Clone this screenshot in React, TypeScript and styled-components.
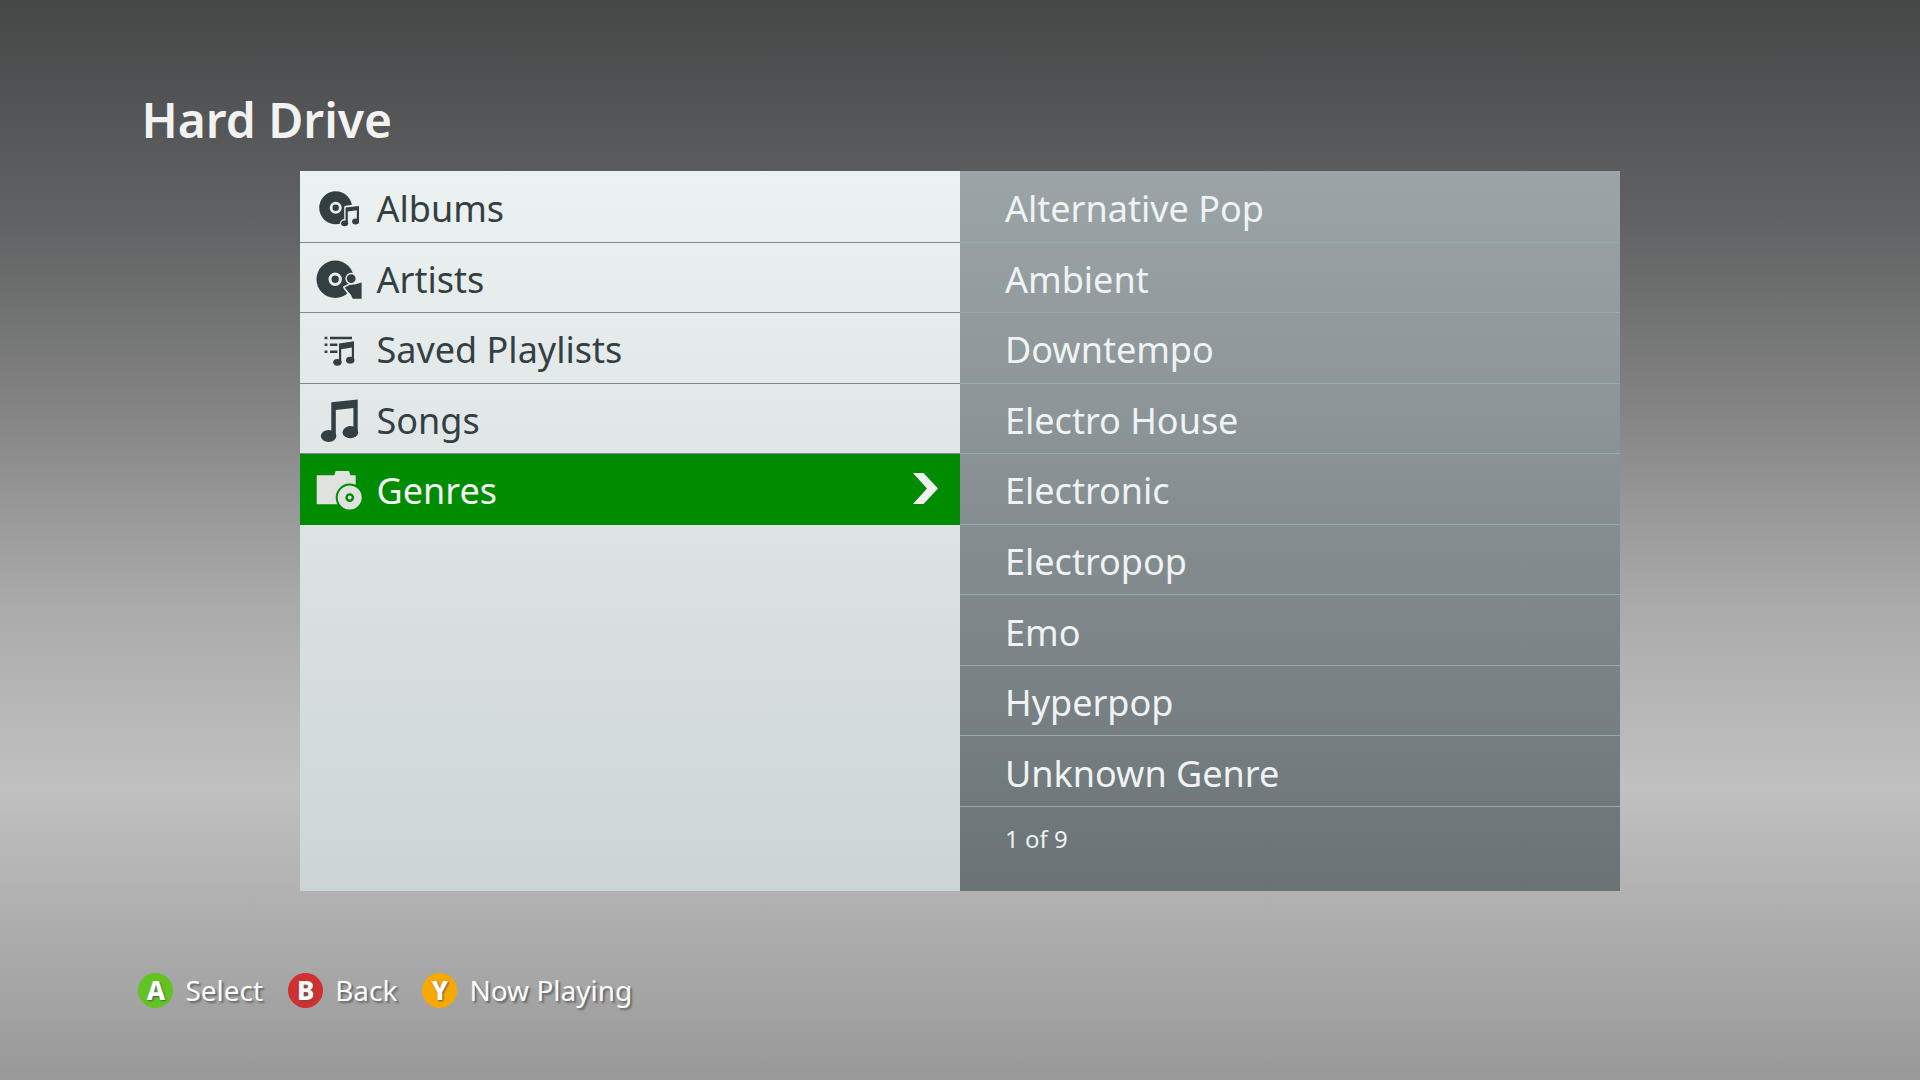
import React, { useState } from "react";
import styled, { createGlobalStyle } from "styled-components";

const GlobalStyle = createGlobalStyle`
  *, *::before, *::after { box-sizing: border-box; }
  body { margin: 0; background: #989899; }
  body, button { font-family: "Noto Sans", "Open Sans", sans-serif; }
`;

const Page = styled.main`
  min-height: 100vh;
  display: flex;
  flex-direction: column;
  padding: 89px 7% 0;
  background: linear-gradient(
    to bottom,
    #464747 0%,
    #525354 9%,
    #606162 20%,
    #717272 29%,
    #848484 38%,
    #989898 47%,
    #aaaaab 56%,
    #b5b5b6 64%,
    #c0c0c0 73%,
    #b1b1b1 83%,
    #a3a3a3 93%,
    #989899 100%
  );
`;

const Title = styled.h1`
  margin: 0 0 20px 7px;
  font-size: 48px;
  line-height: 62px;
  font-weight: 600;
  color: #f2f2f2;
`;

const Panels = styled.div`
  width: 80%;
  min-height: 720px;
  margin: 0 auto;
  display: grid;
  grid-template-columns: 1fr 1fr;
`;

const Panel = styled.section<{ $dark?: boolean }>`
  display: flex;
  flex-direction: column;
  padding-top: 1px;
  background: ${(p) =>
    p.$dark
      ? "linear-gradient(#9ba5a7, #848d8f 50%, #697274)"
      : "linear-gradient(#ecf1f1, #dde2e3 50%, #ccd5d6)"};
`;

const List = styled.ul`
  flex: 1;
  margin: 0;
  padding: 0;
  list-style: none;
  display: grid;
  grid-template-rows: repeat(9, 1fr);
`;

const Item = styled.li`
  display: flex;
`;

const Row = styled.button`
  flex: 1;
  display: flex;
  align-items: center;
  border: 0;
  background: none;
  font-size: 36px;
  line-height: 48px;
  text-align: left;
  cursor: pointer;
`;

const MenuRow = styled(Row)<{ $selected: boolean }>`
  gap: 14px;
  padding: 1px 20px 0 15px;
  color: ${(p) => (p.$selected ? "#f4f4f4" : "#343f43")};
  background: ${(p) => (p.$selected ? "#008c00" : "none")};
  border-bottom: 1px solid ${(p) => (p.$selected ? "#008c00" : "#7d8c90")};
`;

const GenreRow = styled(Row)`
  padding: 5px 45px 0;
  color: #f0f2f3;
  border-bottom: 1px solid #97abac;
`;

const Label = styled.span`
  flex: 1;
  padding-top: 4px;
`;

const Count = styled.footer`
  height: 84px;
  padding: 14px 45px;
  font-size: 24px;
  line-height: 36px;
  color: #eef0f1;
`;

const Glyph = styled.svg`
  width: 48px;
  height: 48px;
  flex: none;
  fill: currentColor;
`;

const Chevron = styled.svg`
  width: 28px;
  height: 32px;
  flex: none;
  fill: #f0f0f0;
`;

const Legend = styled.nav`
  display: flex;
  gap: 25px;
  margin-top: 79px;
  padding: 0 4px;
`;

const Hint = styled.button`
  display: flex;
  align-items: center;
  gap: 12px;
  padding: 0;
  border: 0;
  background: none;
  font-size: 28px;
  line-height: 40px;
  color: #fafafa;
  text-shadow: 2px 2px 2px #666;
  cursor: pointer;
`;

const Pad = styled.span<{ $color: string }>`
  width: 35px;
  height: 35px;
  display: grid;
  place-items: center;
  border-radius: 50%;
  background: ${(p) => p.$color};
  font-size: 26px;
  font-weight: 800;
  line-height: 35px;
  text-shadow: 1px 1px 2px #555;
`;

const AlbumsIcon = () => (
  <Glyph viewBox="0 0 48 48" aria-hidden="true">
    <circle cx="20.7" cy="24.8" r="16.5" />
    <circle cx="20.7" cy="24.8" r="4.6" fill="none" stroke="#e9eeee" strokeWidth="2.8" />
    <g fill="#e9eeee" stroke="#e9eeee" strokeWidth="3.2" strokeLinejoin="round">
      <path d="M30.8 24.3 44 22.4V38.3L30.8 40.3z" />
      <ellipse cx="29.8" cy="40.3" rx="3.3" ry="2.7" />
      <ellipse cx="40.8" cy="38.3" rx="3.3" ry="2.7" />
    </g>
    <path d="M30.6 24.6 44 22.9V38.3h-2.2V27.2l-9 1.4v11.7h-2.2z" />
    <ellipse cx="29.6" cy="40.3" rx="3.5" ry="2.9" />
    <ellipse cx="40.6" cy="38.5" rx="3.5" ry="2.9" />
  </Glyph>
);

const ArtistsIcon = () => (
  <Glyph viewBox="0 0 48 48" aria-hidden="true">
    <circle cx="20.2" cy="25.3" r="18.7" />
    <circle cx="20.2" cy="25.3" r="5.2" fill="none" stroke="#e7ecec" strokeWidth="3" />
    <g stroke="#e7ecec" strokeWidth="3" strokeLinejoin="round">
      <circle cx="36.2" cy="24.6" r="4.4" />
      <path d="M29.6 33.4 34.5 31 46.6 29v15.7h-8.8z" />
    </g>
    <circle cx="36.2" cy="24.6" r="4.4" />
    <path d="M29.6 33.4 34.5 31l6-.8 6.1-1.8v16.3h-8.8L36 41z" />
  </Glyph>
);

const PlaylistsIcon = () => (
  <Glyph viewBox="0 0 48 48" aria-hidden="true">
    <path d="M9.6 12.8h2.8v2.4H9.6zM15 12.8h22v2.4H15zM9.6 19.5h2.8v2.4H9.6zM15 19.5h7.4v2.4H15zM9.6 26.5h2.8v2.4H9.6zM15 26.5h7.4v2.4H15z" />
    <path d="M24 19.6 39 17.2V36h-2.2V23.4L26.2 25.2v13.3H24z" />
    <ellipse cx="22.4" cy="38.3" rx="4.2" ry="3.4" />
    <ellipse cx="35.2" cy="36.2" rx="4.2" ry="3.4" />
  </Glyph>
);

const SongsIcon = () => (
  <Glyph viewBox="0 0 48 48" aria-hidden="true">
    <path d="M16.3 7.2 42.7 4.6V38h-4.3V13L20.8 15v26h-4.5z" />
    <ellipse cx="13.6" cy="41" rx="7.8" ry="6.1" />
    <ellipse cx="35.4" cy="37.2" rx="7.8" ry="6.1" />
  </Glyph>
);

const GenresIcon = () => (
  <Glyph viewBox="0 0 48 48" aria-hidden="true">
    <g fill="#e0e2e0">
      <path d="M1.7 10.3H19.3L20.6 6H34l1.4 4.3h5.3v29h-39z" />
      <circle cx="34.7" cy="32.6" r="13" stroke="#008c00" strokeWidth="2" />
      <circle cx="34.7" cy="32.6" r="3.2" stroke="#008c00" strokeWidth="2.4" />
    </g>
  </Glyph>
);

const menu = [
  { name: "Albums", Icon: AlbumsIcon },
  { name: "Artists", Icon: ArtistsIcon },
  { name: "Saved Playlists", Icon: PlaylistsIcon },
  { name: "Songs", Icon: SongsIcon },
  { name: "Genres", Icon: GenresIcon },
];

const genres = [
  "Alternative Pop",
  "Ambient",
  "Downtempo",
  "Electro House",
  "Electronic",
  "Electropop",
  "Emo",
  "Hyperpop",
  "Unknown Genre",
];

const hints = [
  { pad: "A", text: "Select", color: "#62c322" },
  { pad: "B", text: "Back", color: "#d03030" },
  { pad: "Y", text: "Now Playing", color: "#f8a900" },
];

export default function App() {
  const [selected, setSelected] = useState("Genres");
  return (
    <>
      <GlobalStyle />
      <Page>
        <Title>Hard Drive</Title>
        <Panels>
          <Panel>
            <List>
              {menu.map(({ name, Icon }) => (
                <Item key={name}>
                  <MenuRow $selected={name === selected} onClick={() => setSelected(name)}>
                    <Icon />
                    <Label>{name}</Label>
                    {name === selected && (
                      <Chevron viewBox="0 0 28 32" aria-hidden="true">
                        <path d="M1 0h10.5L26 15.5 11.5 31H1L15 15.5z" />
                      </Chevron>
                    )}
                  </MenuRow>
                </Item>
              ))}
            </List>
            <Count as="div" />
          </Panel>
          <Panel $dark>
            <List>
              {genres.map((genre) => (
                <Item key={genre}>
                  <GenreRow>{genre}</GenreRow>
                </Item>
              ))}
            </List>
            <Count>1 of {genres.length}</Count>
          </Panel>
        </Panels>
        <Legend>
          {hints.map(({ pad, text, color }) => (
            <Hint key={pad}>
              <Pad $color={color}>{pad}</Pad>
              {text}
            </Hint>
          ))}
        </Legend>
      </Page>
    </>
  );
}
